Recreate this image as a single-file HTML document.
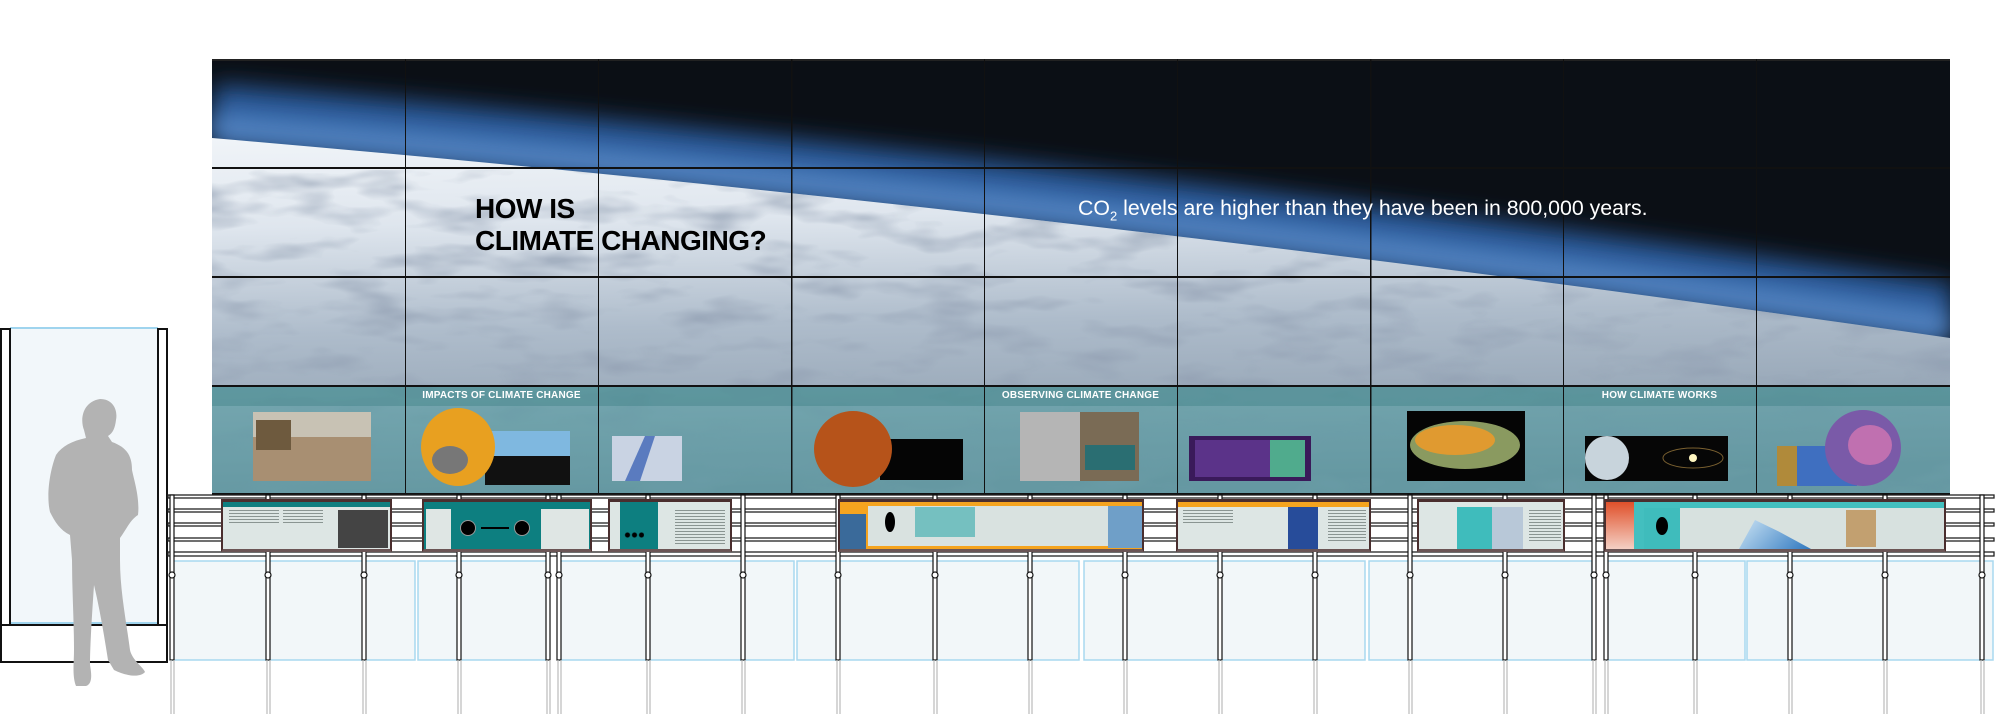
<!DOCTYPE html>
<html><head><meta charset="utf-8">
<style>
*{margin:0;padding:0;box-sizing:border-box}
body{width:2000px;height:714px;background:#fff;position:relative;overflow:hidden;font-family:"Liberation Sans",sans-serif}
.a{position:absolute}
.pn{position:absolute;top:499px;height:53px;border:2px solid #4a2e2e;border-top-width:3px;border-bottom:3px solid #6b5555;background:#dde6e4;overflow:hidden}
.lbl{position:absolute;top:390px;width:193px;text-align:center;color:#fff;font-weight:bold;font-size:10px;letter-spacing:0.2px}
.t{position:absolute;background:repeating-linear-gradient(#8a9592 0 1px,transparent 1px 3px)}
</style></head><body>

<svg class="a" style="left:0;top:0" width="2000" height="714">
<defs>
<linearGradient id="cl" x1="0" y1="0" x2="0.1" y2="1">
<stop offset="0" stop-color="#f0f4f8"/><stop offset="0.25" stop-color="#dfe6ee"/><stop offset="0.55" stop-color="#aebccb"/><stop offset="1" stop-color="#8697a8"/>
</linearGradient>
<filter id="bl" x="-0.1" y="-1" width="1.2" height="3"><feGaussianBlur stdDeviation="12"/></filter>
<filter id="tx" x="0" y="0" width="1" height="1">
<feTurbulence type="fractalNoise" baseFrequency="0.012 0.04" numOctaves="3" seed="7"/>
<feColorMatrix type="matrix" values="0 0 0 0 0.28  0 0 0 0 0.34  0 0 0 0 0.44  0 0 0 -2.6 1.35"/>
</filter>
<clipPath id="wc"><rect x="212" y="59" width="1738" height="436"/></clipPath>
<clipPath id="ec"><path d="M212,138 Q1080,212 1950,338 L1950,495 L212,495 Z"/></clipPath>
</defs>
<g clip-path="url(#wc)">
<rect x="212" y="59" width="1738" height="436" fill="#0b0f15"/>
<path d="M212,114 Q1080,188 1950,314" fill="none" stroke="#2a5a9a" stroke-width="60" filter="url(#bl)"/>
<path d="M212,127 Q1080,201 1950,327" fill="none" stroke="#5d8fcc" stroke-width="24" filter="url(#bl)" opacity="0.9"/>
<path d="M212,138 Q1080,212 1950,338 L1950,495 L212,495 Z" fill="url(#cl)"/>
<g clip-path="url(#ec)"><rect x="212" y="170" width="1738" height="325" filter="url(#tx)" opacity="0.65"/></g>
<rect x="212" y="386" width="1738" height="109" fill="#3a9a9a" opacity="0.42"/>
<rect x="212" y="386" width="1738" height="20" fill="#2a7476" opacity="0.3"/>
</g>
<rect x="212" y="59" width="1738" height="2" fill="#222"/>
<g fill="#111">
<rect x="212" y="167" width="1738" height="2"/><rect x="212" y="276" width="1738" height="2"/><rect x="212" y="385" width="1738" height="2"/><rect x="212" y="493" width="1738" height="2"/>
<rect x="405" y="59" width="1" height="436"/><rect x="598" y="59" width="1" height="436"/><rect x="791" y="59" width="1.5" height="436"/><rect x="984" y="59" width="1" height="436"/><rect x="1177" y="59" width="1" height="436"/><rect x="1370" y="59" width="1.5" height="436"/><rect x="1563" y="59" width="1" height="436"/><rect x="1756" y="59" width="1" height="436"/>
</g>
<rect x="253" y="412" width="118" height="69" fill="#a88f72"/><rect x="253" y="412" width="118" height="25" fill="#c8c2b4"/><rect x="256" y="420" width="35" height="30" fill="#6e5a3e"/>
<rect x="485" y="431" width="85" height="54" fill="#111"/><rect x="485" y="431" width="85" height="25" fill="#7fb8e0"/>
<ellipse cx="458" cy="447" rx="37" ry="39" fill="#e8a020"/><ellipse cx="450" cy="460" rx="18" ry="14" fill="#777"/>
<rect x="612" y="436" width="70" height="45" fill="#c9d3e3"/><path d="M625,481 L645,436 L655,436 L640,481Z" fill="#5a7bbf"/>
<rect x="880" y="439" width="83" height="41" fill="#050505"/>
<ellipse cx="853" cy="449" rx="39" ry="38" fill="#b6531a"/>
<rect x="1020" y="412" width="60" height="69" fill="#b5b5b5"/><rect x="1080" y="412" width="59" height="69" fill="#7a6b55"/><rect x="1085" y="445" width="50" height="25" fill="#2a6e72"/>
<rect x="1189" y="436" width="122" height="45" fill="#3a1a5a"/>
<rect x="1195" y="440" width="110" height="37" fill="#6a3f9c" opacity="0.7"/><rect x="1270" y="440" width="35" height="37" fill="#4ec98f" opacity="0.8"/>
<rect x="1407" y="411" width="118" height="70" fill="#050505"/><ellipse cx="1465" cy="445" rx="55" ry="24" fill="#8a9a60"/><ellipse cx="1455" cy="440" rx="40" ry="15" fill="#e09a30"/>
<rect x="1585" y="436" width="143" height="45" fill="#060606"/><ellipse cx="1607" cy="458" rx="22" ry="22" fill="#c8d4dc"/><circle cx="1693" cy="458" r="4" fill="#fff6c0"/><ellipse cx="1693" cy="458" rx="30" ry="10" fill="none" stroke="#7a6030"/>
<rect x="1777" y="446" width="80" height="40" fill="#3f6fc0"/><rect x="1777" y="446" width="20" height="40" fill="#b08a3a"/>
<ellipse cx="1863" cy="448" rx="38" ry="38" fill="#7a5aa8"/><ellipse cx="1870" cy="445" rx="22" ry="20" fill="#c070b0"/>

<rect x="10" y="328" width="148" height="297" fill="#f2f7fa"/>
<rect x="10" y="327" width="148" height="2" fill="#9fd4ee"/>
<rect x="10" y="622" width="148" height="2" fill="#9fd4ee"/>
<g fill="none" stroke="#111" stroke-width="2">
<rect x="1" y="329" width="9" height="296"/><rect x="158" y="329" width="9" height="296"/>
<rect x="1" y="625" width="166" height="37"/>
</g>
<path fill="#b3b3b3" d="M100,399 C113,399 118,410 116,420 C115,428 113,433 108,436 L112,442 C126,447 132,455 132,470 C134,480 140,498 138,515 C130,520 126,530 120,538 L120,560 C120,590 126,620 130,650 C132,660 144,668 145,672 C140,678 126,676 114,670 L108,660 C104,635 100,610 94,585 C92,615 90,645 90,665 C92,676 92,684 86,686 L76,686 C72,676 74,662 74,650 C74,620 72,590 72,560 L70,535 C60,530 55,522 50,512 C46,495 50,470 56,455 C62,446 72,441 86,438 L84,430 C80,420 82,402 100,399 Z"/>

<g fill="#fff" stroke="#222" stroke-width="1.3">
<rect x="168" y="495" width="1826" height="3"/>
<rect x="168" y="509" width="1826" height="3"/>
<rect x="168" y="523" width="1826" height="3"/>
<rect x="168" y="538" width="1826" height="3"/>
<rect x="168" y="552" width="1826" height="4"/>
</g>
<g fill="#f2f7f9" stroke="#a8d8ef" stroke-width="1.5">
<rect x="172" y="561" width="243" height="99"/><rect x="418" y="561" width="129" height="99"/><rect x="559" y="561" width="235" height="99"/><rect x="797" y="561" width="282" height="99"/><rect x="1084" y="561" width="281" height="99"/><rect x="1369" y="561" width="223" height="99"/><rect x="1606" y="561" width="139" height="99"/><rect x="1747" y="561" width="246" height="99"/>
</g>
<defs><g id="p"><rect x="-2" y="495" width="4" height="165"/><circle cx="0" cy="575" r="3"/><line x1="-1" y1="660" x2="-1" y2="714" stroke="#bbb"/><line x1="2" y1="660" x2="2" y2="714" stroke="#bbb"/></g></defs>
<g stroke="#111" stroke-width="1.2" fill="#fff">
<use href="#p" x="172"/><use href="#p" x="268"/><use href="#p" x="364"/><use href="#p" x="459"/><use href="#p" x="548"/><use href="#p" x="559"/><use href="#p" x="648"/><use href="#p" x="743"/><use href="#p" x="838"/><use href="#p" x="935"/><use href="#p" x="1030"/><use href="#p" x="1125"/><use href="#p" x="1220"/><use href="#p" x="1315"/><use href="#p" x="1410"/><use href="#p" x="1505"/><use href="#p" x="1594"/><use href="#p" x="1606"/><use href="#p" x="1695"/><use href="#p" x="1790"/><use href="#p" x="1885"/><use href="#p" x="1982"/>
</g>
</svg>

<div class="a" style="left:475px;top:193px;font-size:28px;font-weight:bold;line-height:32px;color:#000;letter-spacing:-0.5px">HOW IS<br>CLIMATE CHANGING?</div>
<div class="a" style="left:1078px;top:196px;font-size:21.3px;color:#fff;white-space:nowrap">CO<sub style="font-size:13px">2</sub> levels are higher than they have been in 800,000 years.</div>
<div class="lbl" style="left:405px">IMPACTS OF CLIMATE CHANGE</div>
<div class="lbl" style="left:984px">OBSERVING CLIMATE CHANGE</div>
<div class="lbl" style="left:1563px">HOW CLIMATE WORKS</div>

<div class="pn" style="left:221px;width:171px">
 <div class="a" style="left:0;top:0;width:100%;height:5px;background:#0e7f80"></div>
 <div class="t" style="left:6px;top:8px;width:50px;height:14px"></div><div class="t" style="left:60px;top:8px;width:40px;height:14px"></div>
 <div class="a" style="left:115px;top:8px;width:50px;height:38px;background:#444"></div>
</div>
<div class="pn" style="left:422px;width:170px;background:#0d7f80">
 <div class="a" style="left:2px;top:7px;width:25px;height:40px;background:#dfe6e4"></div>
 <div class="a" style="left:117px;top:7px;width:48px;height:40px;background:#dfe6e4"></div>
 <div class="a" style="left:36px;top:18px;width:16px;height:16px;border-radius:50%;background:#000;border:1px solid #999"></div>
 <div class="a" style="left:90px;top:18px;width:16px;height:16px;border-radius:50%;background:#000;border:1px solid #999"></div>
 <div class="a" style="left:57px;top:25px;width:28px;height:2px;background:#000"></div>
</div>
<div class="pn" style="left:608px;width:124px">
 <div class="a" style="left:10px;top:0;width:38px;height:47px;background:#0d7f80"></div>
 <div class="a" style="left:14px;top:30px;width:20px;height:6px;background:radial-gradient(circle,#000 2px,transparent 3px) 0 0/7px 6px"></div>
 <div class="t" style="left:65px;top:8px;width:50px;height:35px"></div>
</div>
<div class="pn" style="left:838px;width:306px;background:#f5a41f">
 <div class="a" style="left:28px;top:4px;width:240px;height:40px;background:#d9e2e0"></div>
 <div class="a" style="left:0;top:12px;width:26px;height:35px;background:#3a6a9a"></div>
 <div class="a" style="left:45px;top:10px;width:10px;height:20px;border-radius:50%;background:#000"></div>
 <div class="a" style="left:75px;top:5px;width:60px;height:30px;background:#5bb8b8;opacity:0.8"></div>
 <div class="a" style="left:268px;top:4px;width:34px;height:42px;background:#6f9fc8"></div>
</div>
<div class="pn" style="left:1176px;width:195px">
 <div class="a" style="left:0;top:0;width:100%;height:5px;background:#f5a41f"></div>
 <div class="t" style="left:5px;top:8px;width:50px;height:15px"></div>
 <div class="a" style="left:110px;top:5px;width:30px;height:42px;background:#274c9a"></div>
 <div class="t" style="left:150px;top:8px;width:38px;height:32px"></div>
</div>
<div class="pn" style="left:1417px;width:148px">
 <div class="a" style="left:38px;top:5px;width:35px;height:42px;background:#3fbcbc"></div>
 <div class="a" style="left:73px;top:5px;width:31px;height:42px;background:#b8c8d8"></div>
 <div class="t" style="left:110px;top:8px;width:32px;height:32px"></div>
</div>
<div class="pn" style="left:1604px;width:342px;background:#43bfbf">
 <div class="a" style="left:0;top:0;width:28px;height:47px;background:linear-gradient(#e0502a,#f4d0c4)"></div>
 <div class="a" style="left:38px;top:6px;width:300px;height:41px;background:#d7e1df"></div>
 <div class="a" style="left:38px;top:6px;width:36px;height:41px;background:#3fbcbc"></div>
 <div class="a" style="left:50px;top:15px;width:12px;height:18px;border-radius:50%;background:#000"></div>
 <div class="a" style="left:125px;top:18px;width:80px;height:29px;background:linear-gradient(135deg,#d8ecf8,#2f78c0);clip-path:polygon(10% 100%,30% 0,60% 40%,100% 100%)"></div>
 <div class="a" style="left:240px;top:8px;width:30px;height:37px;background:#c2a070"></div>
</div>
</body></html>
